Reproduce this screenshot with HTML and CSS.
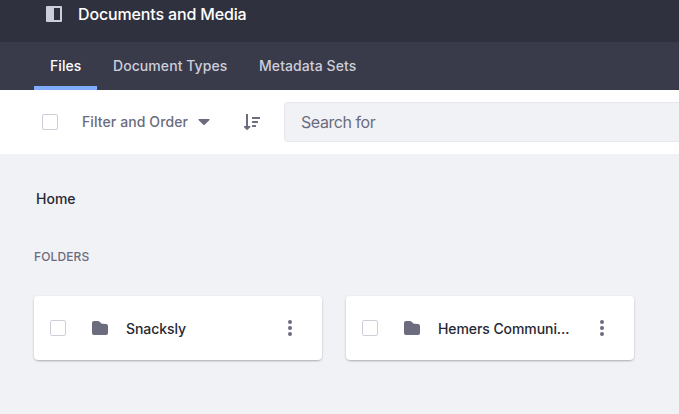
FILE: index.html
```html
<!DOCTYPE html>
<html lang="en">
<head>
<meta charset="utf-8">
<title>Documents and Media</title>
<link rel="stylesheet" href="styles.css">
</head>
<body>
<header class="header">
  <svg class="panel-icon" width="16" height="16" viewBox="0 0 16 16"><path fill="#cdced9" fill-rule="evenodd" d="M1 0h14a1 1 0 0 1 1 1v14a1 1 0 0 1-1 1H1a1 1 0 0 1-1-1V1a1 1 0 0 1 1-1zM8 2v12h6V2z"/></svg>
  <h1 class="title">Documents and Media</h1>
</header>
<nav class="tabs">
  <a class="tab active">Files</a>
  <a class="tab types">Document Types</a>
  <a class="tab sets">Metadata Sets</a>
</nav>
<div class="toolbar">
  <span class="checkbox"></span>
  <span class="filter">Filter and Order</span>
  <svg class="caret" width="12" height="6" viewBox="0 0 12 6"><path fill="#6b6c7e" d="M1 0h10q1 .1.5 1L6.700 5.700q-.7.6-1.400 0L.5 1Q0 .1 1 0z"/></svg>
  <svg class="sort" width="16" height="16" viewBox="0 0 16 16"><path fill="#6b6c7e" d="M2 0h2v12h1.700q1.300.2.500 1.200l-2.300 2.300q-.8.800-1.700 0L.1 13.200q-.7-1 .4-1.200H2zM8.500 3h7a.5.5 0 0 1 .5.500v1a.5.5 0 0 1-.5.500h-7a.5.5 0 0 1-.5-.5v-1a.5.5 0 0 1 .5-.5zM8.500 7h5a.5.5 0 0 1 .5.500v1a.5.5 0 0 1-.5.500h-5a.5.5 0 0 1-.5-.5v-1a.5.5 0 0 1 .5-.5zM8.500 11h3a.5.5 0 0 1 .5.500v1a.5.5 0 0 1-.5.500h-3a.5.5 0 0 1-.5-.5v-1a.5.5 0 0 1 .5-.5z"/></svg>
  <div class="search"><span>Search for</span></div>
</div>
<main class="content">
  <div class="breadcrumb"><span>Home</span></div>
  <h2 class="section"><span>FOLDERS</span></h2>
  <div class="cards">
    <div class="card">
      <span class="checkbox"></span>
      <svg class="folder" width="16" height="16" viewBox="0 0 16 16"><path fill="#6b6c7e" d="M0 3q0-2 2-2h4q1.200 0 1.900.9l.7.900q.7.900 1.900.9L14 4q2 0 2 2v7q0 2-2 2H2q-2 0-2-2z"/></svg>
      <span class="name">Snacksly</span>
      <svg class="dots" width="16" height="16" viewBox="0 0 16 16"><g fill="#6b6c7e"><circle cx="8" cy="2" r="2"/><circle cx="8" cy="8" r="2"/><circle cx="8" cy="14" r="2"/></g></svg>
    </div>
    <div class="card">
      <span class="checkbox"></span>
      <svg class="folder" width="16" height="16" viewBox="0 0 16 16"><path fill="#6b6c7e" d="M0 3q0-2 2-2h4q1.200 0 1.900.9l.7.900q.7.900 1.900.9L14 4q2 0 2 2v7q0 2-2 2H2q-2 0-2-2z"/></svg>
      <span class="name">Hemers Communi...</span>
      <svg class="dots" width="16" height="16" viewBox="0 0 16 16"><g fill="#6b6c7e"><circle cx="8" cy="2" r="2"/><circle cx="8" cy="8" r="2"/><circle cx="8" cy="14" r="2"/></g></svg>
    </div>
  </div>
</main>
</body>
</html>
```
FILE: styles.css
```css
* { box-sizing: border-box; }
body {
  margin: 0;
  height: 414px;
  overflow: hidden;
  background: #f1f2f5;
  color: #272833;
  font: 550 14px/20px Inter, sans-serif;
}
svg { display: block; flex: none; }
.header {
  display: flex;
  align-items: flex-start;
  height: 42px;
  padding: 4px 0 0 46px;
  background: #30313f;
}
.panel-icon { margin: 2px 16px 0 0; }
.title {
  margin: 0;
  color: #fff;
  font-size: 16px;
  font-weight: 550;
  line-height: 21px;
  letter-spacing: -0.15px;
  white-space: nowrap;
}
.tabs {
  display: flex;
  height: 48px;
  padding-left: 34px;
  background: #393a4a;
}
.tab {
  width: 63px;
  padding: 14px 0 0 16px;
  color: #cdced9;
  font-weight: 500;
  letter-spacing: 0.07px;
  white-space: nowrap;
}
.tab.types { width: 146px; }
.tab.sets { width: 130px; }
.tab.active {
  color: #fff;
  font-weight: 550;
  border-bottom: 4px solid #80acff;
}
.toolbar {
  display: flex;
  align-items: center;
  height: 64px;
  padding-left: 42px;
  background: #fff;
}
.checkbox {
  flex: none;
  width: 16px;
  height: 16px;
  background: #fff;
  border: 1px solid #cdced9;
  border-radius: 2px;
}
.filter {
  width: 116px;
  margin-left: 24px;
  color: #6b6c7e;
  letter-spacing: 0.1px;
  white-space: nowrap;
}
.sort { margin: 0 24px 0 34px; }
.search {
  flex: 1;
  height: 40px;
  padding: 9px 16px;
  background: #f1f2f5;
  border: 1px solid #e7e7ed;
  border-right: 0;
  border-radius: 4px 0 0 4px;
  color: #6b6c7e;
  font-size: 16px;
  font-weight: 400;
  letter-spacing: -0.43px;
}
.content { padding: 35px 0 0 34px; }
.breadcrumb { padding-left: 2px; }
.section {
  margin: 37px 0 29px;
  color: #6b6c7e;
  font-size: 12px;
  font-weight: 500;
  line-height: 21px;
  letter-spacing: 0.12px;
}
.cards { display: flex; gap: 24px; }
.card {
  display: flex;
  align-items: center;
  width: 288px;
  height: 64px;
  padding: 0 24px 0 16px;
  background: #fff;
  border-radius: 4px;
  box-shadow: 0 1px 3px -1px rgba(0, 0, 0, .6);
}
.folder { margin: 0 18px 0 26px; }
.name { flex: 1; padding-top: 1px; letter-spacing: -0.08px; white-space: nowrap; }
```
